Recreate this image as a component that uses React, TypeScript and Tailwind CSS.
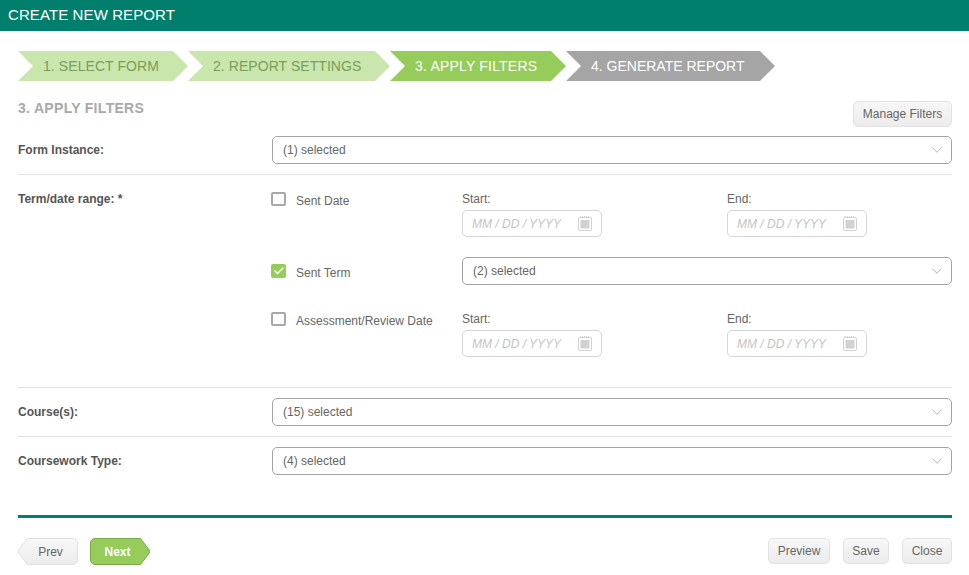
import { Check, ChevronDown } from "lucide-react";

const font = "font-['Liberation_Sans',Arial,sans-serif]";

const steps = [
  { label: "1. SELECT FORM", width: "w-[170px]", tone: "bg-[#c9e6ad] text-[#7b9e58] tracking-[0.08px]" },
  { label: "2. REPORT SETTINGS", width: "w-[202px]", tone: "bg-[#c9e6ad] text-[#7b9e58] tracking-[0.06px]" },
  { label: "3. APPLY FILTERS", width: "w-[176px]", tone: "bg-[#95cc5a] text-white tracking-[0.2px]" },
  { label: "4. GENERATE REPORT", width: "w-[209px]", tone: "bg-[#a5a5a5] text-white" },
];

function Wizard() {
  return (
    <div className="flex h-[30px] pl-[18px]">
      {steps.map((step) => (
        <div
          key={step.label}
          className={`flex h-[30px] items-center pl-[25px] text-[14px] [clip-path:polygon(0_0,calc(100%-15px)_0,100%_50%,calc(100%-15px)_100%,0_100%,15px_50%)] ${step.width} ${step.tone}`}
        >
          {step.label}
        </div>
      ))}
    </div>
  );
}

function SelectBox({ value }: { value: string }) {
  return (
    <div className="flex h-[28px] flex-1 items-center justify-between rounded-[5px] border border-[#a3a3a3] bg-white pl-[10px] pr-[5px] text-[12px] text-[#666]">
      <span>{value}</span>
      <ChevronDown className="h-[18px] w-[18px] text-[#aaa]" strokeWidth={1.2} />
    </div>
  );
}

function FormRow({ label, value }: { label: string; value: string }) {
  return (
    <div className="flex items-center">
      <div className="w-[254px] text-[12px] font-bold text-[#555]">{label}</div>
      <SelectBox value={value} />
    </div>
  );
}

function CalendarIcon() {
  return (
    <svg width="14" height="15" viewBox="0 0 14 15" className="text-[#d2d2d2]">
      <rect x="0.5" y="1.5" width="13" height="13" rx="1.5" fill="none" stroke="currentColor" />
      <rect x="2.5" y="4" width="9" height="8.5" fill="currentColor" />
      <path d="M2 0.5h10" stroke="currentColor" strokeDasharray="1 1" />
    </svg>
  );
}

function DateField({ label, className }: { label: string; className?: string }) {
  return (
    <div className={className}>
      <div className="mt-[1px] h-[12px] text-[12px] leading-[12px] text-[#666]">{label}</div>
      <div className="mt-[5px] flex h-[27px] w-[140px] items-center justify-between rounded-[5px] border border-[#d5d5d5] bg-white pl-[9px] pr-[9px] text-[12px] italic text-[#c4c4c4]">
        <span>MM / DD / YYYY</span>
        <CalendarIcon />
      </div>
    </div>
  );
}

function CheckLabel({ label, checked, className }: { label: string; checked?: boolean; className?: string }) {
  return (
    <div className={`flex w-[190px] items-start text-[12px] text-[#666] ${className ?? ""}`}>
      {checked ? (
        <span className="-ml-px flex h-[14px] w-[15px] items-center justify-center rounded-[2px] bg-[#95cc5a]">
          <Check className="h-[12px] w-[12px] text-white" strokeWidth={3} />
        </span>
      ) : (
        <span className="-ml-px h-[14px] w-[15px] rounded-[2px] border-2 border-[#a8a8a8] bg-white" />
      )}
      <span className="ml-[10px]">{label}</span>
    </div>
  );
}

function GreyButton({ children, width }: { children: string; width: string }) {
  return (
    <button className={`flex h-[26px] items-center justify-center rounded-[5px] border border-[#e2e2e2] bg-gradient-to-b from-[#f7f7f7] to-[#ececec] text-[12px] text-[#666] ${width}`}>
      {children}
    </button>
  );
}

export default function App() {
  return (
    <div className={`h-[575px] w-[969px] overflow-hidden bg-white ${font}`}>
      <div className="flex h-[31px] items-center bg-[#00806c] pl-[8px] text-[15px] tracking-[0.1px] text-white">CREATE NEW REPORT</div>

      <div className="pt-[20px]">
        <Wizard />
      </div>

      <div className="pl-[18px] pr-[17px]">
        <div className="mt-[20px] flex items-start justify-between">
          <div className="text-[14px] font-bold leading-[14px] tracking-[0.3px] text-[#a9a9a9]">3. APPLY FILTERS</div>
          <GreyButton width="w-[99px]">Manage Filters</GreyButton>
        </div>

        <div className="mt-[9px]">
          <FormRow label="Form Instance:" value="(1) selected" />
        </div>
        <div className="mt-[10px] border-t border-[#e2e2e2]" />

        <div className="flex pt-[17px]">
          <div className="w-[254px] text-[12px] font-bold leading-[14px] text-[#555]">Term/date range: *</div>
          <div className="flex-1">
            <div className="flex items-start">
              <CheckLabel label="Sent Date" />
              <DateField label="Start:" />
              <DateField label="End:" className="ml-[125px]" />
            </div>
            <div className="mt-[20px] flex items-start">
              <CheckLabel label="Sent Term" checked className="mt-[7px]" />
              <SelectBox value="(2) selected" />
            </div>
            <div className="mt-[27px] flex items-start">
              <CheckLabel label="Assessment/Review Date" />
              <DateField label="Start:" />
              <DateField label="End:" className="ml-[125px]" />
            </div>
          </div>
        </div>

        <div className="mt-[30px] border-t border-[#e2e2e2]" />
        <div className="mt-[10px]">
          <FormRow label="Course(s):" value="(15) selected" />
        </div>
        <div className="mt-[10px] border-t border-[#e2e2e2]" />
        <div className="mt-[10px]">
          <FormRow label="Coursework Type:" value="(4) selected" />
        </div>

        <div className="mt-[40px] h-[3px] bg-[#00806c]" />

        <div className="mt-[20px] flex items-start justify-between">
          <div className="flex gap-[12px]">
            <div className="relative flex h-[27px] w-[60px] items-center justify-center pl-[5px] text-[12px] text-[#666]">
              <svg className="absolute inset-0" width="60" height="27" viewBox="0 0 60 27">
                <defs>
                  <linearGradient id="prevFill" x1="0" y1="0" x2="0" y2="1">
                    <stop offset="0" stopColor="#f8f8f8" />
                    <stop offset="1" stopColor="#ececec" />
                  </linearGradient>
                </defs>
                <path d="M9.5 0.5H55a4.5 4.5 0 0 1 4.5 4.5V22a4.5 4.5 0 0 1-4.5 4.5H9.5L0.7 15a2.5 2.5 0 0 1 0-3Z" fill="url(#prevFill)" stroke="#e0e0e0" />
              </svg>
              <span className="relative">Prev</span>
            </div>
            <div className="relative flex h-[27px] w-[60px] items-center justify-center pr-[5px] text-[12px] font-bold text-white">
              <svg className="absolute inset-0" width="60" height="27" viewBox="0 0 60 27">
                <path d="M5 0.5H50.5L59.3 12a2.5 2.5 0 0 1 0 3L50.5 26.5H5A4.5 4.5 0 0 1 0.5 22V5A4.5 4.5 0 0 1 5 0.5Z" fill="#95cc5a" stroke="#7ba84a" />
              </svg>
              <span className="relative">Next</span>
            </div>
          </div>
          <div className="flex gap-[13px]">
            <GreyButton width="w-[62px]">Preview</GreyButton>
            <GreyButton width="w-[46px]">Save</GreyButton>
            <GreyButton width="w-[50px]">Close</GreyButton>
          </div>
        </div>
      </div>
    </div>
  );
}
